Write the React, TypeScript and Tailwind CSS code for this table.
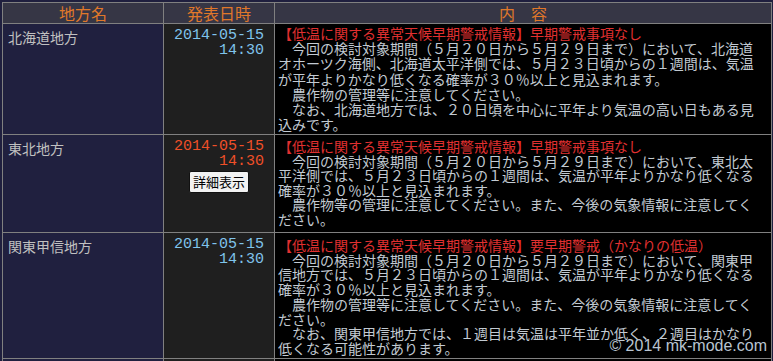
import React from 'react'

type Row = {
  area: string
  date: string
  time: string
  alert?: boolean
  height: string
  body: string
  heading: string
  paragraphs: string[]
}

const rows: Row[] = [
  {
    area: '北海道地方',
    date: '2014-05-15',
    time: '14:30',
    height: 'h-[110px]',
    body: 'pt-[2px] leading-[15.2px]',
    heading: '【低温に関する異常天候早期警戒情報】早期警戒事項なし',
    paragraphs: [
      '　今回の検討対象期間（５月２０日から５月２９日まで）において、北海道オホーツク海側、北海道太平洋側では、５月２３日頃からの１週間は、気温が平年よりかなり低くなる確率が３０％以上と見込まれます。',
      '　農作物の管理等に注意してください。',
      '　なお、北海道地方では、２０日頃を中心に平年より気温の高い日もある見込みです。',
    ],
  },
  {
    area: '東北地方',
    date: '2014-05-15',
    time: '14:30',
    alert: true,
    height: 'h-[97px]',
    body: 'pt-[4px] leading-[14.6px]',
    heading: '【低温に関する異常天候早期警戒情報】早期警戒事項なし',
    paragraphs: [
      '　今回の検討対象期間（５月２０日から５月２９日まで）において、東北太平洋側では、５月２３日頃からの１週間は、気温が平年よりかなり低くなる確率が３０％以上と見込まれます。',
      '　農作物等の管理に注意してください。また、今後の気象情報に注意してください。',
    ],
  },
  {
    area: '関東甲信地方',
    date: '2014-05-15',
    time: '14:30',
    height: 'h-[125px]',
    body: 'pt-[5px] leading-[14.7px]',
    heading: '【低温に関する異常天候早期警戒情報】要早期警戒（かなりの低温）',
    paragraphs: [
      '　今回の検討対象期間（５月２０日から５月２９日まで）において、関東甲信地方では、５月２３日頃からの１週間は、気温が平年よりかなり低くなる確率が３０％以上と見込まれます。',
      '　農作物の管理等に注意してください。また、今後の気象情報に注意してください。',
      '　なお、関東甲信地方では、１週目は気温は平年並か低く、２週目はかなり低くなる可能性があります。',
    ],
  },
]

const HeaderCell = ({ children }: { children: React.ReactNode }) => (
  <div className="bg-[#363645] text-center text-[16px] leading-[20px] text-[#e0782a]">{children}</div>
)

export default function App() {
  return (
    <div className="relative h-[361px] overflow-hidden bg-[#1f1f3e] pl-[2px] pt-[2px] font-['Noto_Sans_CJK_JP',sans-serif]">
      <div className="grid w-[770px] grid-cols-[160px_110px_496px] gap-px bg-[#808080] p-px">
        <HeaderCell>地方名</HeaderCell>
        <HeaderCell>発表日時</HeaderCell>
        <HeaderCell>内　容</HeaderCell>

        {rows.map((row) => (
          <React.Fragment key={row.area}>
            {/* area */}
            <div className={`${row.height} bg-[#20203f] px-[5px] pt-[5px] text-[14px] leading-[16px] text-[#c0c0c0]`}>
              {row.area}
            </div>

            {/* date */}
            <div className={`${row.height} bg-[#1f1f1f] pt-[4px]`}>
              <div
                className={`pr-[10px] text-right font-['Liberation_Mono',monospace] text-[15px] leading-[15px] ${
                  row.alert ? 'text-[#f05028]' : 'text-[#80c4ec]'
                }`}
              >
                <div>{row.date}</div>
                <div>{row.time}</div>
              </div>
              {row.alert && (
                <div className="mt-[2px] flex justify-center">
                  <button className="rounded-[2px] border border-[#111] bg-[#f2f2f2] px-[3px] text-[13px] leading-[20px] text-black">
                    詳細表示
                  </button>
                </div>
              )}
            </div>

            {/* content */}
            <div className={`${row.height} ${row.body} bg-black pl-[3px] pr-[10px] text-[14px] text-[#c2cad2]`}>
              <div className="text-[#e03030]">{row.heading}</div>
              {row.paragraphs.map((p, i) => (
                <div key={i}>{p}</div>
              ))}
            </div>
          </React.Fragment>
        ))}

        {/* next row, scrolled out of view */}
        <div className="h-[20px] bg-[#20203f]" />
        <div className="h-[20px] bg-[#1f1f1f]" />
        <div className="h-[20px] bg-black" />
      </div>

      {/* footer */}
      <div className="absolute bottom-[6px] right-[6px] font-['Liberation_Sans',sans-serif] text-[16px] leading-[18px] text-[#b8c4d0]">
        © 2014 mk-mode.com
      </div>
    </div>
  )
}
